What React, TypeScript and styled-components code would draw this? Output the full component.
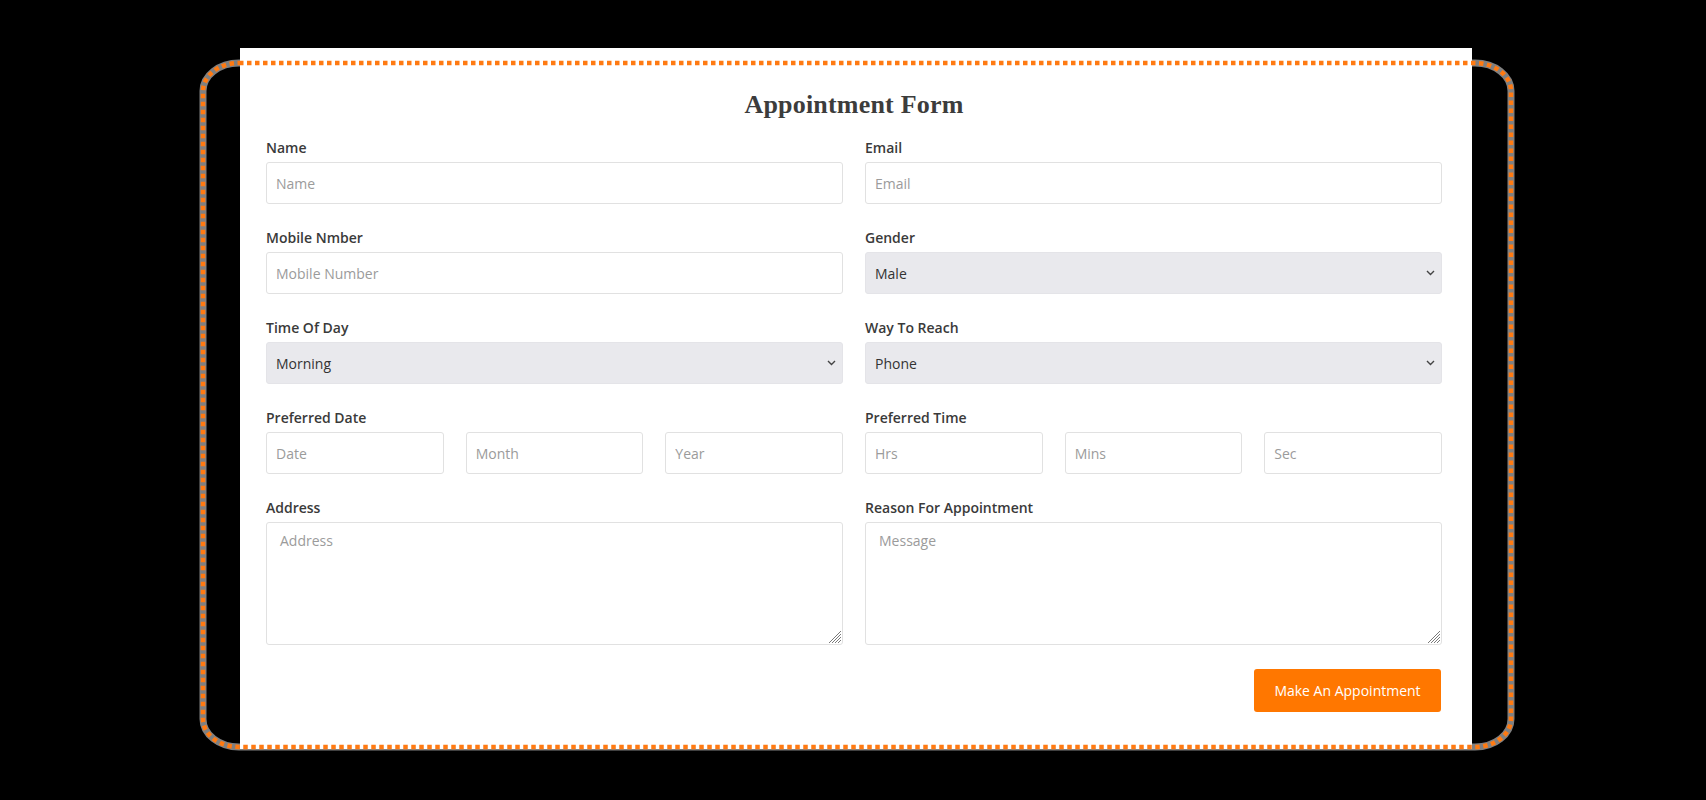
import React from "react";
import styled, { createGlobalStyle } from "styled-components";

const GlobalStyle = createGlobalStyle`
  html, body {
    margin: 0;
    padding: 0;
    background: #000000;
  }
  body {
    font-family: "Open Sans", "Noto Sans", sans-serif;
    color: #333333;
  }
  * { box-sizing: border-box; }
  input::placeholder, textarea::placeholder { color: #9b9b9b; opacity: 1; }
`;

const Stage = styled.div`
  position: relative;
  width: 1706px;
  height: 800px;
  padding-top: 48px;
  overflow: hidden;
`;

const Panel = styled.section`
  width: 1232px;
  margin-left: 240px;
  background: #ffffff;
  padding: 42px 30px 37px 26px;
`;

const Title = styled.h2`
  margin: 0 0 18px;
  text-align: center;
  font-family: "Liberation Serif", "DejaVu Serif", serif;
  font-weight: 700;
  font-size: 26px;
  line-height: 30px;
  color: #3c3c3c;
  letter-spacing: 0.2px;
`;

const FormGrid = styled.form`
  display: grid;
  grid-template-columns: 1fr 1fr;
  column-gap: 22px;
  row-gap: 24px;
`;

const Field = styled.div`
  display: flex;
  flex-direction: column;
  min-width: 0;
`;

const Label = styled.label`
  font-size: 14px;
  line-height: 20px;
  font-weight: 600;
  color: #3a3a3a;
  margin-bottom: 4px;
`;

const TextInput = styled.input`
  width: 100%;
  height: 42px;
  border: 1px solid #e1e1e1;
  border-radius: 3px;
  padding: 0 9px;
  font-family: "Open Sans", sans-serif;
  font-size: 14px;
  color: #333333;
  background: #ffffff;
  outline: none;
`;

const Triple = styled.div`
  display: grid;
  grid-template-columns: repeat(3, 1fr);
  column-gap: 22px;
`;

const SelectWrap = styled.div`
  position: relative;
`;

const Select = styled.select`
  appearance: none;
  -webkit-appearance: none;
  width: 100%;
  height: 42px;
  border: 1px solid #e4e4e8;
  border-radius: 3px;
  padding: 0 28px 0 9px;
  background: #e9e9ed;
  font-family: "Open Sans", sans-serif;
  font-size: 14px;
  color: #333333;
  outline: none;
`;

const Chevron = styled.svg`
  position: absolute;
  right: 7px;
  top: 50%;
  margin-top: -3px;
  pointer-events: none;
`;

const AreaWrap = styled.div`
  position: relative;
`;

const TextArea = styled.textarea`
  display: block;
  width: 100%;
  height: 123px;
  border: 1px solid #e1e1e1;
  border-radius: 3px;
  padding: 8px 13px;
  font-family: "Open Sans", sans-serif;
  font-size: 14px;
  line-height: 20px;
  color: #333333;
  resize: none;
  outline: none;
`;

const Grip = styled.svg`
  position: absolute;
  right: 2px;
  bottom: 2px;
  pointer-events: none;
`;

const Actions = styled.div`
  display: flex;
  justify-content: flex-end;
  margin-top: 24px;
  padding-right: 1px;
`;

const Button = styled.button`
  height: 43px;
  width: 187px;
  border: none;
  border-radius: 3px;
  background: #ff7700;
  color: #ffffff;
  font-family: "Open Sans", sans-serif;
  font-size: 14px;
  cursor: pointer;
`;

const Outline = styled.svg`
  position: absolute;
  left: 0;
  top: 0;
  pointer-events: none;
`;

const ChevronIcon = () => (
  <Chevron width="9" height="6" viewBox="0 0 9 6">
    <polyline points="1,1 4.5,4.5 8,1" fill="none" stroke="#444" strokeWidth="1.4" />
  </Chevron>
);

const GripIcon = () => (
  <Grip width="14" height="14" viewBox="0 0 14 14">
    {[2, 5, 8, 11].map((s) => (
      <line key={s} x1={s} y1="14" x2="14" y2={s} stroke="#7a7a7a" strokeWidth="1" />
    ))}
  </Grip>
);

type SelectProps = { id: string; options: string[] };
const SelectField = ({ id, options }: SelectProps) => (
  <SelectWrap>
    <Select id={id} defaultValue={options[0]}>
      {options.map((o) => (
        <option key={o}>{o}</option>
      ))}
    </Select>
    <ChevronIcon />
  </SelectWrap>
);

export default function App() {
  return (
    <>
      <GlobalStyle />
      <Stage>
        <Panel>
          <Title>Appointment Form</Title>
          <FormGrid onSubmit={(e) => e.preventDefault()}>
            <Field>
              <Label htmlFor="name">Name</Label>
              <TextInput id="name" placeholder="Name" />
            </Field>
            <Field>
              <Label htmlFor="email">Email</Label>
              <TextInput id="email" placeholder="Email" />
            </Field>
            <Field>
              <Label htmlFor="mobile">Mobile Nmber</Label>
              <TextInput id="mobile" placeholder="Mobile Number" />
            </Field>
            <Field>
              <Label htmlFor="gender">Gender</Label>
              <SelectField id="gender" options={["Male", "Female"]} />
            </Field>
            <Field>
              <Label htmlFor="tod">Time Of Day</Label>
              <SelectField id="tod" options={["Morning", "Afternoon", "Evening"]} />
            </Field>
            <Field>
              <Label htmlFor="reach">Way To Reach</Label>
              <SelectField id="reach" options={["Phone", "Email"]} />
            </Field>
            <Field>
              <Label>Preferred Date</Label>
              <Triple>
                <TextInput placeholder="Date" />
                <TextInput placeholder="Month" />
                <TextInput placeholder="Year" />
              </Triple>
            </Field>
            <Field>
              <Label>Preferred Time</Label>
              <Triple>
                <TextInput placeholder="Hrs" />
                <TextInput placeholder="Mins" />
                <TextInput placeholder="Sec" />
              </Triple>
            </Field>
            <Field>
              <Label htmlFor="address">Address</Label>
              <AreaWrap>
                <TextArea id="address" placeholder="Address" />
                <GripIcon />
              </AreaWrap>
            </Field>
            <Field>
              <Label htmlFor="reason">Reason For Appointment</Label>
              <AreaWrap>
                <TextArea id="reason" placeholder="Message" />
                <GripIcon />
              </AreaWrap>
            </Field>
          </FormGrid>
          <Actions>
            <Button type="button">Make An Appointment</Button>
          </Actions>
        </Panel>
        <Outline width="1706" height="800" viewBox="0 0 1706 800">
          <rect x="203" y="63" width="1308" height="684" rx="36" ry="28"
            fill="none" stroke="rgba(255,255,255,0.5)" strokeWidth="7" />
          <rect x="203" y="63" width="1308" height="684" rx="36" ry="28"
            fill="none" stroke="#ff7a12" strokeWidth="4.5" strokeDasharray="4.5 3.5" />
        </Outline>
      </Stage>
    </>
  );
}
